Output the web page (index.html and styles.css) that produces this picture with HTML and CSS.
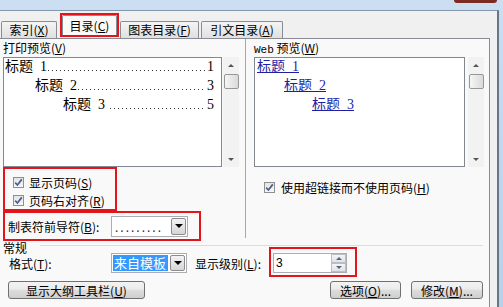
FILE: index.html
```html
<!DOCTYPE html>
<html lang="zh-CN">
	<head>
		<meta charset="UTF-8" />
		<title>目录</title>
		<link rel="stylesheet" href="styles.css">
	</head>
	<body>
		<div class="frame">
			<div class="titlebar"><span class="close-edge"></span></div>

			<div class="client">
				<div class="tabs">
					<div class="tab tab-index">索引(<u>X</u>)</div>
					<div class="mark mark-tab">
						<div class="tab tab-active">目录(<u>C</u>)</div>
					</div>
					<div class="tab tab-figures">图表目录(<u>F</u>)</div>
					<div class="tab tab-cites">引文目录(<u>A</u>)</div>
				</div>

				<div class="panel">
					<div class="cols">
						<div class="col col-print">
							<div class="caption">打印预览(<u>V</u>)</div>
							<div class="preview">
								<div class="preview-box">
									<div class="toc-row lvl1"><span>标题  1</span><span class="leader"></span><span>1</span></div>
									<div class="toc-row lvl2"><span>标题  2</span><span class="leader"></span><span>3</span></div>
									<div class="toc-row lvl3"><span>标题  3 </span><span class="leader"></span><span>5</span></div>
								</div>
								<div class="scrollbar">
									<span class="sb-btn"><i class="arrow-up"></i></span>
									<span class="sb-thumb"></span>
									<span class="sb-btn sb-down"><i class="arrow-down"></i></span>
								</div>
							</div>

							<div class="mark mark-checks">
								<label class="check-row">
									<span class="check"><svg width="9" height="9" viewBox="0 0 9 9"><path d="M1.2 4.6 L3.4 7 L7.8 1.4" fill="none" stroke="#4a5d8e" stroke-width="1.7"/></svg></span>
									显示页码(<u>S</u>)
								</label>
								<label class="check-row">
									<span class="check"><svg width="9" height="9" viewBox="0 0 9 9"><path d="M1.2 4.6 L3.4 7 L7.8 1.4" fill="none" stroke="#4a5d8e" stroke-width="1.7"/></svg></span>
									页码右对齐(<u>R</u>)
								</label>
							</div>

							<div class="mark mark-leader">
								<span class="field-label leader-label">制表符前导符(<u>B</u>):</span>
								<div class="combo combo-leader">
									<span class="combo-value dots">.........</span>
									<span class="combo-btn"><i class="arrow-combo"></i></span>
								</div>
							</div>
						</div>

						<div class="col col-web">
							<div class="caption"><span class="mono">Web</span> 预览(<u>W</u>)</div>
							<div class="preview">
								<div class="preview-box web-box">
									<div class="web-row lvl1"><a href="#">标题  1</a></div>
									<div class="web-row lvl2"><a href="#">标题  2</a></div>
									<div class="web-row lvl3"><a href="#">标题  3</a></div>
								</div>
								<div class="scrollbar">
									<span class="sb-btn"><i class="arrow-up"></i></span>
									<span class="sb-thumb"></span>
									<span class="sb-btn sb-down"><i class="arrow-down"></i></span>
								</div>
							</div>
							<label class="check-row web-check">
								<span class="check"><svg width="9" height="9" viewBox="0 0 9 9"><path d="M1.2 4.6 L3.4 7 L7.8 1.4" fill="none" stroke="#4a5d8e" stroke-width="1.7"/></svg></span>
								使用超链接而不使用页码(<u>H</u>)
							</label>
						</div>
					</div>

					<div class="group-head"><span>常规</span><span class="group-line"></span></div>

					<div class="field-row">
						<span class="field-label format-label">格式(<u>T</u>):</span>
						<div class="combo combo-format">
							<span class="combo-value"><span class="selected">来自模板</span></span>
							<span class="combo-btn"><i class="arrow-combo"></i></span>
						</div>
						<span class="field-label level-label">显示级别(<u>L</u>):</span>
						<div class="mark mark-level">
							<div class="spinner">
								<span class="spin-value">3</span>
								<span class="spin-btns">
									<span class="spin-btn"><i class="arrow-spin-up"></i></span>
									<span class="spin-btn"><i class="arrow-spin-down"></i></span>
								</span>
							</div>
						</div>
					</div>

					<div class="button-row">
						<button class="btn btn-outline">显示大纲工具栏(<u>U</u>)</button>
						<button class="btn btn-options">选项(<u>O</u>)...</button>
						<button class="btn btn-modify">修改(<u>M</u>)...</button>
					</div>
				</div>
			</div>
		</div>
	</body>
</html>
```

FILE: styles.css
```css
* {
	box-sizing: border-box;
	margin: 0;
	padding: 0;
}

body {
	font-family: "Noto Sans CJK SC", sans-serif;
	font-size: 12px;
	color: #000;
	background: #c3d8ef;
}

u {
	text-decoration: underline;
}

.frame {
	width: 503px;
	height: 307px;
	overflow: hidden;
	background: linear-gradient(to bottom, #cbdef2, #b8d0ea);
}

.titlebar {
	height: 10px;
	display: flex;
	justify-content: flex-end;
}

.close-edge {
	width: 43px;
	height: 3px;
	margin-right: 6px;
	background: #7d2b22;
	border-radius: 0 0 3px 3px;
}

.client {
	width: 499px;
	height: 297px;
	background: #f0f0f0;
	border-top: 1px solid #8397ad;
	border-right: 2px solid #65778c;
}

/* tabs */
.tabs {
	height: 27px;
	display: flex;
	align-items: flex-end;
	padding-left: 1px;
}

.tab {
	height: 17px;
	line-height: 16px;
	text-align: center;
	border: 1px solid #898c95;
	border-bottom: none;
	border-radius: 2px 2px 0 0;
	background: linear-gradient(#f4f4f4, #e0e0e0);
	white-space: nowrap;
}

.mark {
	border: 2px solid #e3151b;
}

.tab-index {
	width: 56px;
}

.mark-tab {
	width: 59px;
	height: 24px;
	margin-left: 3px;
	margin-bottom: 1px;
}

.tab-active {
	width: 55px;
	height: 20px;
	padding-top: 2px;
	background: #f9f9f9;
}

.tab-figures {
	width: 79px;
	margin-left: 1px;
}

.tab-cites {
	width: 82px;
	margin-left: 2px;
}

/* panel */
.panel {
	width: 490px;
	height: 269px;
	background: #f9f9f9;
	border-top: 1px solid #898c95;
	border-right: 1px solid #898c95;
	padding: 0 6px 0 3px;
}

.cols {
	display: grid;
	grid-template-columns: 242px 1fr;
}

.col-web {
	align-self: start;
	height: 199px;
	padding-left: 8px;
	border-left: 1px solid #a9a9a9;
}

.caption {
	height: 18px;
	line-height: 18px;
	white-space: nowrap;
}

.mono {
	font-family: "Liberation Mono", monospace;
	font-size: 11px;
}

.preview {
	display: flex;
	height: 110px;
}

.preview-box {
	width: 219px;
	height: 110px;
	background: #fff;
	border: 1px solid #828790;
	font-family: "Liberation Serif", "Noto Sans CJK SC", serif;
	font-size: 14px;
	line-height: 19px;
}

.toc-row {
	display: flex;
	align-items: baseline;
	padding-right: 7px;
	white-space: pre;
}

.toc-row:first-child,
.web-row:first-child {
	margin-top: -1px;
}

.leader {
	flex: 1;
	height: 1px;
	margin: 0 2px 0 1px;
	background: linear-gradient(to right, #333 1px, transparent 1px) repeat-x;
	background-size: 4px 1px;
}

.lvl1 {
	padding-left: 1px;
}

.lvl2 {
	padding-left: 31px;
}

.lvl3 {
	padding-left: 59px;
}

.web-box {
	width: 211px;
}

.web-row {
	white-space: pre;
}

.web-row.lvl1 {
	padding-left: 2px;
}

.web-row.lvl2 {
	padding-left: 29px;
}

.web-row.lvl3 {
	padding-left: 57px;
}

.web-row a {
	color: #1f1fa3;
	text-decoration: underline;
}

/* scrollbar */
.scrollbar {
	width: 16px;
	margin-left: 1px;
	display: flex;
	flex-direction: column;
	align-items: center;
	background: #f2f2f2;
}

.col-web .scrollbar {
	margin-left: 3px;
}

.sb-btn {
	height: 16px;
	width: 16px;
	display: flex;
	align-items: center;
	justify-content: center;
}

.sb-down {
	margin-top: auto;
}

.arrow-up,
.arrow-spin-up {
	width: 0;
	height: 0;
	border-left: 3px solid transparent;
	border-right: 3px solid transparent;
	border-bottom: 3px solid #555;
}

.arrow-down,
.arrow-spin-down {
	width: 0;
	height: 0;
	border-left: 3px solid transparent;
	border-right: 3px solid transparent;
	border-top: 3px solid #555;
}

.sb-thumb {
	width: 15px;
	height: 15px;
	margin-top: 1px;
	border: 1px solid #979797;
	border-radius: 2px;
	background: linear-gradient(to right, #f6f6f6, #dadada);
}

/* checkboxes */
.mark-checks {
	width: 114px;
	height: 44px;
	padding: 4px 0 0 8px;
}

.check-row {
	display: flex;
	align-items: center;
	height: 18px;
	white-space: nowrap;
}

.check {
	width: 11px;
	height: 11px;
	margin-right: 5px;
	border: 1px solid #8f8f8f;
	background: linear-gradient(#e4e4e4, #f7f7f7);
	display: flex;
	align-items: center;
	justify-content: center;
}

.web-check {
	margin-top: 11px;
	padding-left: 10px;
}

.web-check .check {
	margin-right: 6px;
}

/* leader combo */
.mark-leader {
	width: 198px;
	height: 30px;
	display: flex;
	align-items: center;
	padding-left: 3px;
}

.leader-label {
	width: 103px;
}

.field-label {
	white-space: nowrap;
}

.combo {
	display: flex;
	height: 21px;
	background: #fff;
	border: 1px solid #abadb3;
}

.combo-leader {
	width: 77px;
}

.combo-value {
	flex: 1;
	display: flex;
	align-items: center;
	padding: 1px;
}

.dots {
	padding-left: 3px;
	letter-spacing: 2px;
	color: #333;
}

.combo-btn {
	width: 15px;
	margin: 1px;
	border: 1px solid #8c8c8c;
	border-radius: 2px;
	background: linear-gradient(#f3f3f3, #d5d5d5);
	display: flex;
	align-items: center;
	justify-content: center;
}

.arrow-combo {
	width: 0;
	height: 0;
	border-left: 4px solid transparent;
	border-right: 4px solid transparent;
	border-top: 4px solid #000;
}

/* general group */
.group-head {
	height: 12px;
	display: flex;
	line-height: 12px;
	padding-top: 1px;
}

.group-line {
	flex: 1;
	height: 1px;
	margin: 3px 0 0 13px;
	background: #d5dfe5;
}

.field-row {
	display: flex;
	align-items: center;
	height: 20px;
	padding-left: 6px;
}

.format-label {
	width: 102px;
}

.combo-format {
	width: 76px;
	height: 20px;
}

.selected {
	display: block;
	width: 100%;
	height: 100%;
	padding-left: 1px;
	line-height: 16px;
	background: #3399ff;
	color: #fff;
	font-size: 13px;
}

.level-label {
	width: 74px;
	margin-left: 8px;
}

.mark-level {
	height: 30px;
	margin: -2px 0 0 0;
	padding: 4px 8px 2px 2px;
}

.spinner {
	width: 74px;
	height: 20px;
	display: flex;
	background: #fff;
	border: 1px solid #abadb3;
}

.spin-value {
	flex: 1;
	padding-left: 2px;
	line-height: 18px;
	font-family: "Liberation Sans", sans-serif;
}

.spin-btns {
	width: 15px;
	display: flex;
	flex-direction: column;
}

.spin-btn {
	flex: 1;
	display: flex;
	align-items: center;
	justify-content: center;
	border: 1px solid #b9bdc6;
	background: linear-gradient(#f5f5f5, #e0e2e8);
}

.arrow-spin-up {
	border-bottom-color: #5a6278;
}

.arrow-spin-down {
	border-top-color: #5a6278;
}

/* buttons */
.button-row {
	display: flex;
	gap: 10px;
	margin-top: 8px;
	padding-left: 5px;
}

.btn {
	height: 18px;
	font-family: inherit;
	font-size: 12px;
	line-height: 15px;
	border: 1px solid #707070;
	border-radius: 3px;
	background: linear-gradient(#f3f3f3 0%, #ebebeb 45%, #dddddd 50%, #cfcfcf 100%);
	color: #000;
	white-space: nowrap;
}

.btn-outline {
	width: 137px;
	margin-right: auto;
}

.btn-options {
	width: 71px;
}

.btn-modify {
	width: 72px;
}
```
